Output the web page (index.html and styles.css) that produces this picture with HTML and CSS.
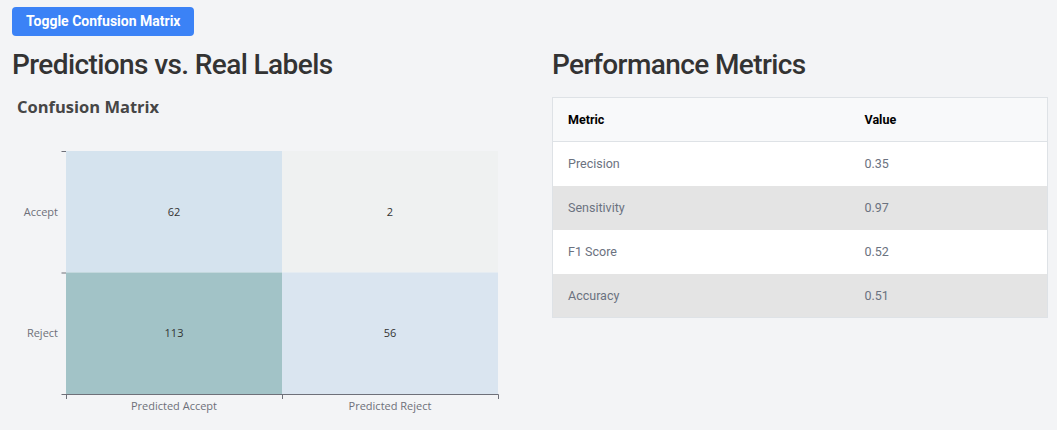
FILE: index.html
```html
<!DOCTYPE html>
<html>
<head>
<meta charset="utf-8">
<link rel="stylesheet" href="styles.css">
</head>
<body>
<div class="page">
  <button class="toggle">Toggle Confusion Matrix</button>
  <div class="columns">
    <section class="col col-left">
      <h2 class="heading">Predictions vs. Real Labels</h2>
      <svg class="chart" width="516" height="340" viewBox="0 0 516 340">
        <text class="chart-title" x="5" y="23">Confusion Matrix</text>
        <rect x="54" y="61" width="216" height="121.5" fill="#d5e3ee"/>
        <rect x="270" y="61" width="216" height="121.5" fill="#eff1f1"/>
        <rect x="54" y="182.5" width="216" height="121.5" fill="#a2c3c7"/>
        <rect x="270" y="182.5" width="216" height="121.5" fill="#dae5f0"/>
        <g class="tick">
          <line x1="49.5" y1="61.5" x2="54" y2="61.5"/>
          <line x1="49.5" y1="183" x2="54" y2="183"/>
          <line x1="49.5" y1="304.5" x2="486.5" y2="304.5"/>
          <line x1="54.5" y1="304.5" x2="54.5" y2="309"/>
          <line x1="270.5" y1="304.5" x2="270.5" y2="309"/>
          <line x1="486.5" y1="304.5" x2="486.5" y2="309"/>
        </g>
        <text class="axis-label" x="46" y="125.5" text-anchor="end">Accept</text>
        <text class="axis-label" x="46" y="247" text-anchor="end">Reject</text>
        <text class="axis-label" x="162" y="319.5" text-anchor="middle">Predicted Accept</text>
        <text class="axis-label" x="378" y="319.5" text-anchor="middle">Predicted Reject</text>
        <text class="cell-value" x="162" y="125.5" text-anchor="middle">62</text>
        <text class="cell-value" x="378" y="125.5" text-anchor="middle">2</text>
        <text class="cell-value" x="162" y="247" text-anchor="middle">113</text>
        <text class="cell-value" x="378" y="247" text-anchor="middle">56</text>
      </svg>
    </section>
    <section class="col col-right">
      <h2 class="heading">Performance Metrics</h2>
      <table class="metrics">
        <thead>
          <tr><th class="c-metric">Metric</th><th class="c-value">Value</th></tr>
        </thead>
        <tbody>
          <tr><td>Precision</td><td>0.35</td></tr>
          <tr class="alt"><td>Sensitivity</td><td>0.97</td></tr>
          <tr><td>F1 Score</td><td>0.52</td></tr>
          <tr class="alt"><td>Accuracy</td><td>0.51</td></tr>
        </tbody>
      </table>
    </section>
  </div>
</div>
</body>
</html>
```
FILE: styles.css
```css
html, body {
  margin: 0;
  padding: 0;
  background: #f3f4f6;
}
body {
  font-family: Roboto, "Liberation Sans", sans-serif;
  color: #333;
}
.page {
  padding: 7px 9px 0 12px;
}
.toggle {
  display: block;
  height: 29px;
  padding: 0 14px;
  border: none;
  border-radius: 4px;
  background: #3b82f6;
  color: #fff;
  font-family: Roboto, "Liberation Sans", sans-serif;
  font-weight: 700;
  font-size: 14px;
  line-height: 29px;
  cursor: pointer;
}
.columns {
  display: flex;
  gap: 24px;
  margin-top: 11px;
}
.col-left {
  width: 516px;
}
.col-right {
  flex: 1;
}
.heading {
  margin: 0;
  font-size: 28px;
  line-height: 36px;
  font-weight: 500;
  color: #333;
  letter-spacing: -0.6px;
}
.chart {
  display: block;
  margin-top: 7px;
}
.chart-title {
  font-family: "Open Sans", "Noto Sans", sans-serif;
  font-weight: 700;
  font-size: 16.5px;
  fill: #464646;
}
.tick line {
  stroke: #6e7079;
  stroke-width: 1;
}
.axis-label {
  font-family: "Open Sans", "Noto Sans", sans-serif;
  font-size: 11px;
  fill: #6e7079;
}
.cell-value {
  font-family: "Open Sans", "Noto Sans", sans-serif;
  font-size: 11px;
  fill: #333;
}
.metrics {
  margin-top: 14px;
  width: 496px;
  border-collapse: collapse;
  border: 1px solid #dee2e6;
  font-size: 12.5px;
}
.metrics th, .metrics td {
  height: 44px;
  padding: 0 15px;
  text-align: left;
  box-sizing: border-box;
}
.metrics th {
  background: #f8f9fa;
  color: #000;
  font-weight: 700;
  border-bottom: 1px solid #dee2e6;
}
.metrics .c-metric {
  width: 60%;
}
.metrics td {
  background: #fff;
  color: #6b7280;
}
.metrics tr.alt td {
  background: #e4e4e4;
}
```
